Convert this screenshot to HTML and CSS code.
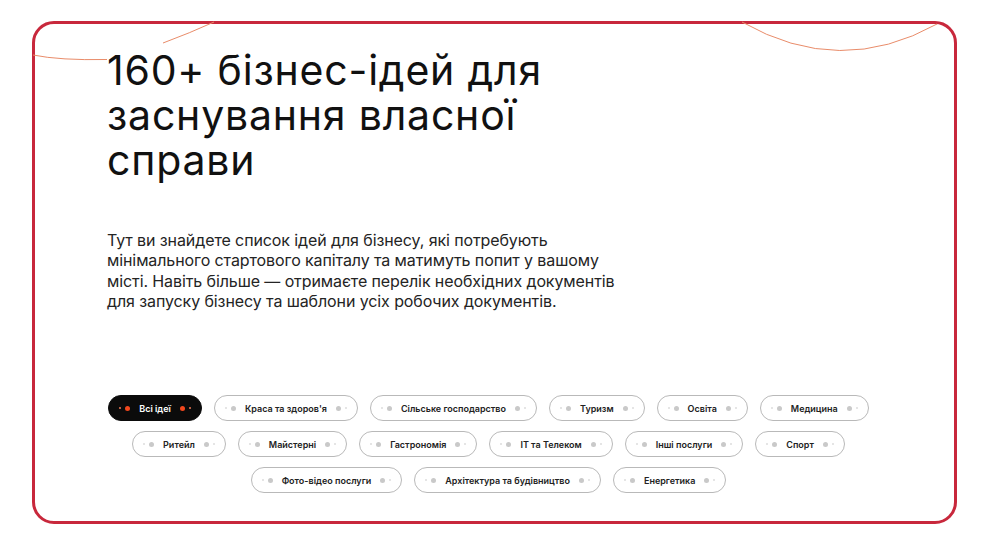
FILE: index.html
```html
<!DOCTYPE html>
<html lang="uk">
<head>
<meta charset="utf-8">
<title>160+ бізнес-ідей</title>
<link rel="stylesheet" href="styles.css">
</head>
<body>
<section class="card">
  <svg class="deco" width="925" height="503" viewBox="0 0 925 503" aria-hidden="true">
    <path d="M1 34 Q28 39.5 75 38.5" />
    <path d="M131 22 Q158 12 182 1" />
    <path d="M710 1 Q808 57 905 3" />
  </svg>
  <div class="content">
    <h1 class="title">160+ бізнес-ідей для заснування власної справи</h1>
    <p class="lead">Тут ви знайдете список ідей для бізнесу, які потребують мінімального стартового капіталу та матимуть попит у вашому місті. Навіть більше — отримаєте перелік необхідних документів для запуску бізнесу та шаблони усіх робочих документів.</p>
    <div class="filters">
      <div class="row">
        <span class="chip active"><i class="dots"></i>Всі ідеї<i class="dots r"></i></span>
        <span class="chip"><i class="dots"></i>Краса та здоров'я<i class="dots r"></i></span>
        <span class="chip"><i class="dots"></i>Сільське господарство<i class="dots r"></i></span>
        <span class="chip"><i class="dots"></i>Туризм<i class="dots r"></i></span>
        <span class="chip"><i class="dots"></i>Освіта<i class="dots r"></i></span>
        <span class="chip"><i class="dots"></i>Медицина<i class="dots r"></i></span>
      </div>
      <div class="row">
        <span class="chip"><i class="dots"></i>Ритейл<i class="dots r"></i></span>
        <span class="chip"><i class="dots"></i>Майстерні<i class="dots r"></i></span>
        <span class="chip"><i class="dots"></i>Гастрономія<i class="dots r"></i></span>
        <span class="chip"><i class="dots"></i>IT та Телеком<i class="dots r"></i></span>
        <span class="chip"><i class="dots"></i>Інші послуги<i class="dots r"></i></span>
        <span class="chip"><i class="dots"></i>Спорт<i class="dots r"></i></span>
      </div>
      <div class="row">
        <span class="chip"><i class="dots"></i>Фото-відео послуги<i class="dots r"></i></span>
        <span class="chip"><i class="dots"></i>Архітектура та будівництво<i class="dots r"></i></span>
        <span class="chip"><i class="dots"></i>Енергетика<i class="dots r"></i></span>
      </div>
    </div>
  </div>
</section>
</body>
</html>
```

FILE: styles.css
```css
* { box-sizing: border-box; }
html, body { margin: 0; padding: 0; background: #fff; }
body {
  width: 989px;
  height: 545px;
  overflow: hidden;
  padding: 21px 0 0 32px;
  font-family: "Inter", "Liberation Sans", sans-serif;
  color: #1a1a1a;
}
.card {
  position: relative;
  width: 925px;
  height: 503px;
  border: 3px solid #c8283c;
  border-radius: 22px;
  background: #fff;
  padding: 24px 84px 0 72px;
}
.deco {
  position: absolute;
  left: -3px;
  top: -3px;
  pointer-events: none;
  fill: none;
  stroke: #e98c6a;
  stroke-width: 1;
}
.content { position: relative; }
.title {
  margin: 0;
  max-width: 470px;
  font-family: "Inter", "Liberation Sans", sans-serif;
  font-weight: 400;
  font-size: 41px;
  line-height: 45px;
  color: #111;
  letter-spacing: 0.8px;
}
.lead {
  margin: 47px 0 0 0;
  max-width: 515px;
  font-size: 16px;
  line-height: 20.3px;
  color: #242424;
  letter-spacing: -0.1px;
}
.filters {
  margin-top: 84px;
  display: flex;
  flex-direction: column;
  gap: 10px;
}
.row {
  display: flex;
  justify-content: center;
  gap: 12px;
}
.chip {
  display: inline-flex;
  align-items: center;
  height: 26px;
  padding: 0 10px;
  border: 1px solid #b9b9b9;
  border-radius: 13px;
  font-size: 9px;
  font-weight: 600;
  color: #222;
  white-space: nowrap;
  gap: 9px;
}
.dots {
  display: inline-flex;
  align-items: center;
  gap: 4px;
}
.dots::before, .dots::after {
  content: "";
  display: block;
  border-radius: 50%;
}
.dots::before { width: 2px; height: 2px; background: #dcdcdc; }
.dots::after { width: 5px; height: 5px; background: #c9c9c9; }
.dots.r { flex-direction: row-reverse; }
.chip.active {
  background: #0b0b0b;
  border-color: #0b0b0b;
  color: #fff;
}
.chip.active .dots::before { background: #f07a55; }
.chip.active .dots::after { background: #f2471d; }
```
